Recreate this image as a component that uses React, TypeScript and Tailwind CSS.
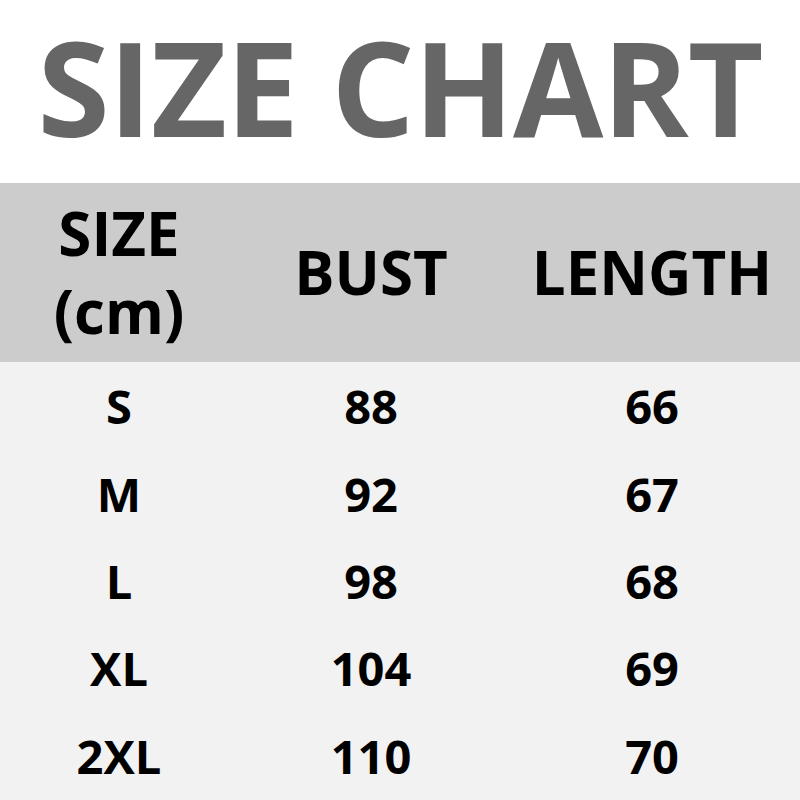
export default function App() {
  const rows = [
    ["S", "88", "66"],
    ["M", "92", "67"],
    ["L", "98", "68"],
    ["XL", "104", "69"],
    ["2XL", "110", "70"],
  ];
  return (
    <div className="w-[800px] h-[800px] flex flex-col bg-white overflow-hidden" style={{ fontFamily: '"Open Sans", sans-serif' }}>
      <div className="h-[183px] flex items-center justify-center">
        <div className="text-[131px] font-bold text-[#666666] leading-none tracking-[-1px] whitespace-nowrap mt-[-9px]">SIZE CHART</div>
      </div>
      <div className="h-[180px] bg-[#cccccc] grid grid-cols-[238px_266px_1fr] items-center text-black font-bold text-[60px]">
        <div className="flex flex-col items-center leading-[78px]">
          <span>SIZE</span>
          <span>(cm)</span>
        </div>
        <div className="text-center leading-none">BUST</div>
        <div className="text-center leading-none">LENGTH</div>
      </div>
      <div className="flex-1 bg-[#f2f2f2] flex flex-col pt-[1px]">
        {rows.map((r) => (
          <div key={r[0]} className="h-[87.4px] grid grid-cols-[238px_266px_1fr] items-center text-black font-bold text-[47px] leading-none">
            <div className="text-center">{r[0]}</div>
            <div className="text-center">{r[1]}</div>
            <div className="text-center">{r[2]}</div>
          </div>
        ))}
      </div>
    </div>
  );
}
